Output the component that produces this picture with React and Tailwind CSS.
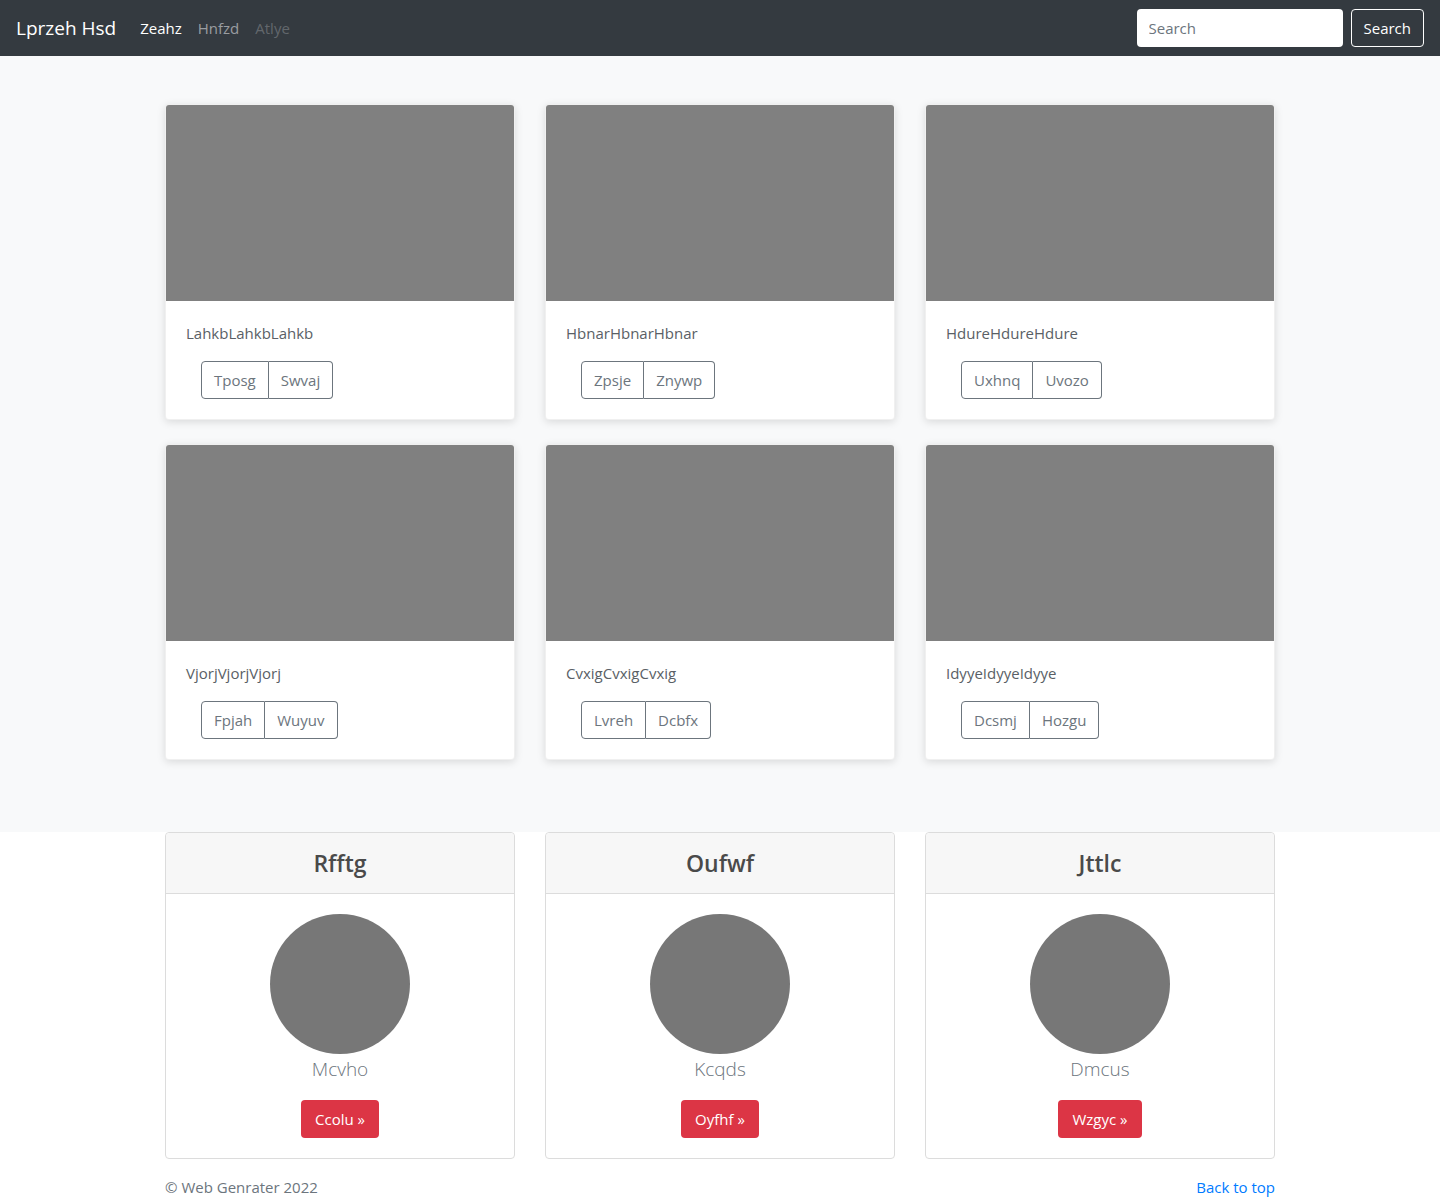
const font = { fontFamily: '"Open Sans", "Noto Sans", sans-serif' };

const albums = [
    { title: 'LahkbLahkbLahkb', a: 'Tposg', b: 'Swvaj' },
    { title: 'HbnarHbnarHbnar', a: 'Zpsje', b: 'Znywp' },
    { title: 'HdureHdureHdure', a: 'Uxhnq', b: 'Uvozo' },
    { title: 'VjorjVjorjVjorj', a: 'Fpjah', b: 'Wuyuv' },
    { title: 'CvxigCvxigCvxig', a: 'Lvreh', b: 'Dcbfx' },
    { title: 'IdyyeIdyyeIdyye', a: 'Dcsmj', b: 'Hozgu' },
];

const plans = [
    { title: 'Rfftg', name: 'Mcvho', cta: 'Ccolu' },
    { title: 'Oufwf', name: 'Kcqds', cta: 'Oyfhf' },
    { title: 'Jttlc', name: 'Dmcus', cta: 'Wzgyc' },
];

function AlbumCard({ title, a, b }) {
    return (
        <div className="bg-white border border-[rgba(0,0,0,0.06)] rounded-[4px] overflow-hidden shadow-[0_2px_8px_rgba(0,0,0,0.13)] mb-6">
            <div className="h-[196px] bg-[#808080]" />
            <div className="p-5">
                <p className="text-[15px] leading-6 text-[#5a5f66] mb-4">{title}</p>
                <div className="ml-[15px] inline-flex h-[38px] text-[15px] text-[#6c757d]">
                    <button className="px-3 border border-[#6c757d] rounded-l-[4px]">{a}</button>
                    <button className="px-3 border border-l-0 border-[#6c757d] rounded-r-[4px]">{b}</button>
                </div>
            </div>
        </div>
    );
}

function PlanCard({ title, name, cta }) {
    return (
        <div className="border border-[#dcdcdc] rounded-[4px] bg-white">
            <div className="h-[61px] flex items-center justify-center bg-[#f7f7f7] border-b border-[#dcdcdc] rounded-t-[4px]">
                <h4 className="text-[23px] font-semibold text-[#4a4a4a]">{title}</h4>
            </div>
            <div className="p-5 flex flex-col items-center">
                <div className="w-[140px] h-[140px] rounded-full bg-[#777777]" />
                <div className="h-[30px] leading-[30px] text-[19px] font-light text-[#6c757d] mb-4">{name}</div>
                <button className="h-[38px] px-[14px] rounded-[4px] bg-[#dc3545] text-white text-[15px]">{cta} »</button>
            </div>
        </div>
    );
}

export default function App() {
    return (
        <div style={font} className="min-h-[1199px] bg-white">
            {/* Navbar */}
            <nav className="h-14 bg-[#343a40] flex items-center px-4">
                <span className="text-[19px] text-white mr-6">Lprzeh Hsd</span>
                <div className="flex gap-4 text-[15px]">
                    <span className="text-white">Zeahz</span>
                    <span className="text-[#9a9da0]">Hnfzd</span>
                    <span className="text-[#62676c]">Atlye</span>
                </div>
                <div className="ml-auto flex items-center gap-2">
                    <input
                        className="w-[206px] h-[38px] rounded-[4px] bg-white px-3 text-[15px] outline-none placeholder:text-[#6c757d]"
                        placeholder="Search"
                    />
                    <button className="h-[38px] px-3 rounded-[4px] border border-white text-white text-[15px]">Search</button>
                </div>
            </nav>

            {/* Album */}
            <section className="bg-[#f8f9fa] pt-12 pb-12">
                <div className="w-[1110px] mx-auto grid grid-cols-3 gap-x-[30px]">
                    {albums.map((al) => (
                        <AlbumCard key={al.title} {...al} />
                    ))}
                </div>
            </section>

            {/* Pricing */}
            <div className="w-[1110px] mx-auto grid grid-cols-3 gap-x-[30px]">
                {plans.map((p) => (
                    <PlanCard key={p.title} {...p} />
                ))}
            </div>

            {/* Footer */}
            <footer className="w-[1110px] mx-auto flex justify-between pt-4 text-[15px] leading-6">
                <span className="text-[#6c757d]">© Web Genrater 2022</span>
                <a className="text-[#007bff]" href="#">Back to top</a>
            </footer>
        </div>
    );
}
